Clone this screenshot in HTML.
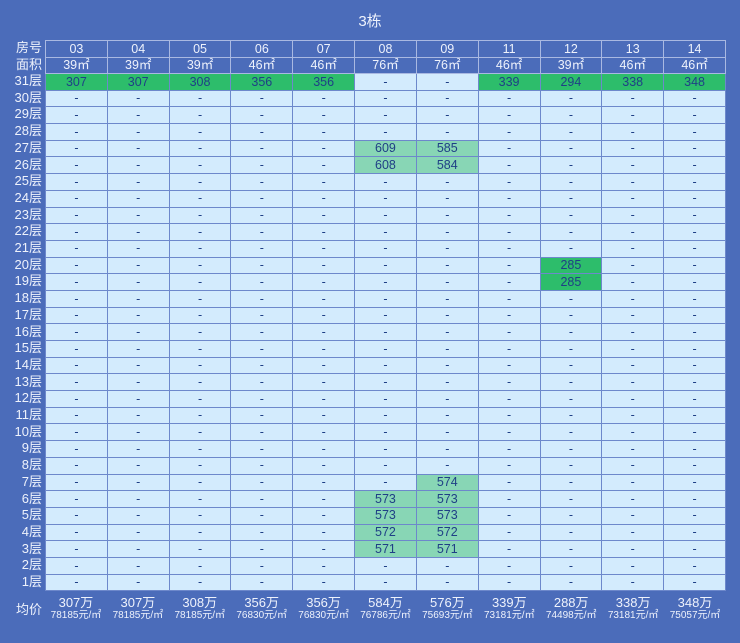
<!DOCTYPE html>
<html><head><meta charset="utf-8"><style>
*{margin:0;padding:0;box-sizing:border-box}
body{width:740px;height:643px;background:#4b6cba;font-family:"Liberation Sans","Noto Sans CJK SC",sans-serif;position:relative;overflow:hidden;color:#1f3f86}
.title{position:absolute;top:10px;left:0;width:740px;text-align:center;color:#eef2fc;font-size:15px}
table{position:absolute;left:45px;top:40px;width:681px;border-collapse:collapse;table-layout:fixed}
td{text-align:center;font-size:12.5px;line-height:1;padding:0;border:1px solid #6d88cb;background:#d3ebfd;height:16.7px}
tr.h td{background:#4b6cba;color:#eef2fc;border-color:#a9b9e2;height:16.5px}
td.g{background:#2dbd6b}
td.l{background:#88d6b5}
.lab{position:absolute;left:0;width:42px;text-align:right;color:#eef2fc;font-size:13px;line-height:16.7px}
.foot{position:absolute;top:596px;left:45px;width:681px;display:flex;color:#eef2fc;text-align:center}
.foot div{flex:1}
.foot b{display:block;font-weight:normal;font-size:13px;line-height:13px}
.foot i{display:block;font-style:normal;font-size:10px;line-height:13px;white-space:nowrap}
</style></head><body>
<div class="title">3栋</div>
<div id="labs"></div>
<table id="t"></table>
<div class="foot">
<div><b>307万</b><i>78185元/㎡</i></div>
<div><b>307万</b><i>78185元/㎡</i></div>
<div><b>308万</b><i>78185元/㎡</i></div>
<div><b>356万</b><i>76830元/㎡</i></div>
<div><b>356万</b><i>76830元/㎡</i></div>
<div><b>584万</b><i>76786元/㎡</i></div>
<div><b>576万</b><i>75693元/㎡</i></div>
<div><b>339万</b><i>73181元/㎡</i></div>
<div><b>288万</b><i>74498元/㎡</i></div>
<div><b>338万</b><i>73181元/㎡</i></div>
<div><b>348万</b><i>75057元/㎡</i></div>
</div>
<div class="lab" style="top:602px;line-height:16px">均价</div>
<script>
var nums=["03","04","05","06","07","08","09","11","12","13","14"];
var areas=["39㎡","39㎡","39㎡","46㎡","46㎡","76㎡","76㎡","46㎡","39㎡","46㎡","46㎡"];
var h='<tr class="h">'+nums.map(n=>'<td>'+n+'</td>').join('')+'</tr>';
h+='<tr class="h">'+areas.map(n=>'<td>'+n+'</td>').join('')+'</tr>';
var top31=["307","307","308","356","356","-","-","339","294","338","348"];
h+='<tr>'+top31.map(v=>'<td class="'+(v=="-"?"":"g")+'">'+v+'</td>').join('')+'</tr>';
var sp={"27_5":"609","27_6":"585","26_5":"608","26_6":"584","20_8":"285","19_8":"285","7_6":"574","6_5":"573","6_6":"573","5_5":"573","5_6":"573","4_5":"572","4_6":"572","3_5":"571","3_6":"571"};
for(var f=30;f>=1;f--){h+='<tr>';for(var c=0;c<11;c++){var k=f+"_"+c;var v=sp[k];var cls=v?(c==8?"g":"l"):"";h+='<td class="'+cls+'">'+(v||"-")+'</td>';}h+='</tr>';}
document.getElementById('t').innerHTML=h;
var L=["房号","面积","31层"];for(var f=30;f>=1;f--)L.push(f+"层");
var lh='';var y=40;L.forEach(function(s,i){lh+='<div class="lab" style="top:'+y+'px">'+s+'</div>';y+=(i<2?16.5:16.7);});
document.getElementById('labs').innerHTML=lh;
</script>
</body></html>
